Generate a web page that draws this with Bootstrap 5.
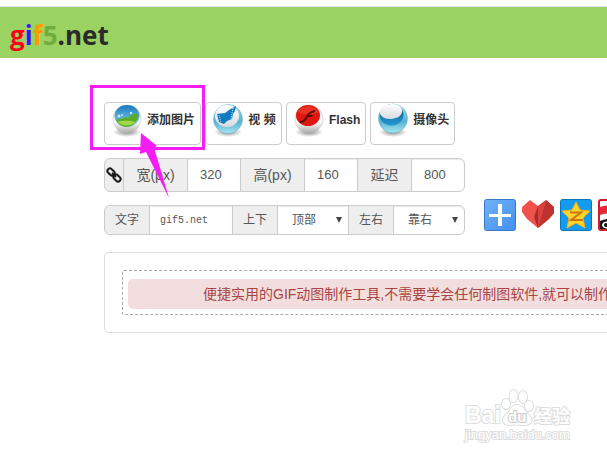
<!DOCTYPE html>
<html lang="zh-CN">
<head>
<meta charset="utf-8">
<meta name="viewport" content="width=device-width, initial-scale=1">
<title>gif5.net</title>
<link href="https://cdn.jsdelivr.net/npm/bootstrap@5.3.0/dist/css/bootstrap.min.css" rel="stylesheet">
<style>
  body { padding-top: 6px; font-family: "Liberation Sans", "Noto Sans CJK SC", sans-serif; font-size: 14px; color: #333; background: #fff; overflow-x: hidden; }
  .site-header { padding: 0 10px; height: 52px; background: #9ad362; border-top: 1px solid #e7e7e7; }
  .brand { font: bold 26px/56px "Open Sans", sans-serif; color: #2b2b2b; text-decoration: none; }
  .brand .c-g { color: #ff0018; } .brand .c-i { color: #3a14ff; } .brand .c-f { color: #ff9c00; } .brand .c-5 { color: #6fae3c; }
  .tool-area { padding: 44px 0 0 104px; }
  .source-btns { gap: 4px; }
  .source-btn { display: flex; height: 43px; padding: 0 5px 0 6px; gap: 4px; border: 1px solid #ccc; border-radius: 4px; background: #fff; color: #333; font-size: 12px; font-weight: bold; line-height: 34px; white-space: nowrap; }
  .source-btn svg { flex: none; width: 32px; height: 38px; }
  .source-btn span { min-width: 28px; }
  .fields { width: max-content; flex-wrap: nowrap; }
  .fields .input-group-text { background: #eee; border-color: #ccc; color: #555; padding: 0; justify-content: center; font-size: 14px; }
  .fields .form-control, .fields .form-select { flex: none; border-color: #ccc; color: #555; font-size: 13px; padding: 0 12px; box-shadow: inset 0 1px 1px rgba(0,0,0,.08); }
  .size-fields { height: 34px; margin-top: 13px; }
  .size-fields .form-control { width: 54px; }
  .size-fields .unit-label { width: 65px; }
  .size-fields .delay-label { width: 55px; }
  .size-fields .link-label { width: 20px; }
  .text-row { margin-top: 7px; gap: 19px; overflow: hidden; }
  .text-fields { height: 30px; margin-top: 6px; }
  .text-fields .input-group-text { font-size: 12px; width: 46px; }
  .text-fields .form-control { width: 84px; padding: 0 10px; font: 10px "Liberation Mono", monospace; }
  .text-fields .form-select { width: 72px; padding: 0 14px; font-size: 12px; background: #fff url("data:image/svg+xml,%3Csvg xmlns='http://www.w3.org/2000/svg' viewBox='0 0 6 6'%3E%3Cpath d='M0 0h6L3 6z' fill='%23444'/%3E%3C/svg%3E") no-repeat right 6px center / 6px 6px; }
  .share-links { gap: 6px; }
  .share-links a { flex: none; width: 32px; height: 32px; }
  .share-links svg { display: block; width: 32px; height: 32px; }
  .stage { margin-top: 17px; padding: 17px 0 17px 17px; border: 1px solid #ddd; border-right: 0; border-radius: 5px 0 0 5px; }
  .drop-zone { padding: 8px 0 5px 5px; border: 1px dashed #aaa; border-right: 0; border-radius: 2px 0 0 2px; }
  .notice { padding: 0 0 0 75px; margin: 0; height: 30px; line-height: 30px; border: 0; border-radius: 5px 0 0 5px; background: #f2dede; color: #a94442; white-space: nowrap; overflow: hidden; }
  .callout-box { left: -14px; top: -17px; width: 115px; height: 65px; border: 3px solid #f41df4; pointer-events: none; }
  .callout-arrow { left: 34px; top: 31px; width: 32px; height: 66px; z-index: 10; pointer-events: none; }
  .watermark { left: 460px; top: 385px; width: 120px; height: 62px; }
</style>
</head>
<body class="position-relative min-vh-100">
<header class="site-header">
  <a class="brand d-inline-block" href="#"><span class="c-g">g</span><span class="c-i">i</span><span class="c-f">f</span><span class="c-5">5</span>.net</a>
</header>

<main class="tool-area">
  <div class="source-btns d-flex position-relative">
    <button type="button" class="source-btn">
      <svg viewBox="0 0 32 38" aria-hidden="true">
        <defs>
          <linearGradient id="silver" x1="0" y1="0" x2="0" y2="1"><stop offset="0" stop-color="#ddd"/><stop offset=".6" stop-color="#fff"/><stop offset="1" stop-color="#aaa"/></linearGradient>
          <linearGradient id="sky" x1="0" y1="0" x2="0" y2="1"><stop offset="0" stop-color="#1878be"/><stop offset="1" stop-color="#8edcf5"/></linearGradient>
          <linearGradient id="aqua" x1="0" y1="0" x2="0" y2="1"><stop offset="0" stop-color="#acdce9"/><stop offset=".6" stop-color="#58b3d2"/><stop offset="1" stop-color="#a8e6f4"/></linearGradient>
          <radialGradient id="shade"><stop offset="0" stop-color="#555" stop-opacity=".8"/><stop offset="1" stop-color="#777" stop-opacity="0"/></radialGradient>
          <linearGradient id="pearl" x1="0" y1="0" x2="0" y2="1"><stop offset="0" stop-color="#fff"/><stop offset="1" stop-color="#d8dcdf"/></linearGradient>
          <linearGradient id="deep" x1="0" y1="0" x2="0" y2="1"><stop offset="0" stop-color="#08558f"/><stop offset="1" stop-color="#269bd1"/></linearGradient>
        </defs>
        <ellipse cx="16" cy="29" rx="14" ry="5" fill="url(#shade)"/>
        <circle cx="16" cy="16" r="14" fill="url(#silver)" stroke="#bbb" stroke-width=".5"/>
        <ellipse cx="16" cy="13" rx="12.5" ry="11" fill="url(#sky)"/>
        <path d="M5 17q3-3 6-1 3-3 6-1 4-5 10-4 1 3-1 6-4 7-10 7-8 0-11-7z" fill="#59ad24"/>
        <path d="M6 19q8-3 19 0-9 7-19 0z" fill="#a3d747"/>
        <g fill="#e4f8ff" opacity=".8"><circle cx="8" cy="13" r="1.5"/><circle cx="11" cy="12" r="1"/><circle cx="20" cy="10" r="1.2"/></g>
      </svg>
      <span>添加图片</span>
    </button>
    <button type="button" class="source-btn">
      <svg viewBox="0 0 32 38" aria-hidden="true">
        <ellipse cx="16" cy="29" rx="14" ry="5" fill="url(#shade)"/>
        <circle cx="16" cy="16" r="14.5" fill="url(#aqua)" stroke="#69adc4" stroke-width=".5"/>
        <ellipse cx="15" cy="13" rx="12" ry="11" fill="url(#pearl)"/>
        <path d="M5 11l8-1 4-3 7-4-1 5-2 3-1 5-5 2-3 3-5-2z" fill="#0f7cc2"/>
        <path d="M7 12l2 7M21 5l-2 11" stroke="#d3eff9" stroke-dasharray="1 1"/>
      </svg>
      <span>视 频</span>
    </button>
    <button type="button" class="source-btn">
      <svg viewBox="0 0 32 38" aria-hidden="true">
        <ellipse cx="16" cy="29" rx="14" ry="5" fill="url(#shade)"/>
        <circle cx="16" cy="16" r="14" fill="url(#silver)" stroke="#bbb" stroke-width=".5"/>
        <ellipse cx="15" cy="12.500" rx="12" ry="10.500" fill="#df1710"/>
        <path d="M4 9q10-12 22 0-10 5-22 0z" fill="#f75a43" opacity=".4"/>
        <path d="M7 18q4 0 6-5 3-5 9-6v2q-4 1-6 3h4l-1 2h-4q-3 6-8 6z" fill="#5d0d0a"/>
      </svg>
      <span>Flash</span>
    </button>
    <button type="button" class="source-btn">
      <svg viewBox="0 0 32 38" aria-hidden="true">
        <ellipse cx="16" cy="29" rx="14" ry="5" fill="url(#shade)"/>
        <circle cx="16" cy="15.500" r="14.500" fill="url(#aqua)" stroke="#69adc4" stroke-width=".5"/>
        <ellipse cx="14.500" cy="12" rx="12" ry="10.500" fill="url(#deep)"/>
        <path d="M2.500 9C4 3 10 1 16 1c6 0 10 4 9 8-1 5-7 7-12 7-6 0-10-3-10.500-7z" fill="url(#pearl)"/>
      </svg>
      <span>摄像头</span>
    </button>
    <div class="callout-box position-absolute"></div>
    <svg class="callout-arrow position-absolute" viewBox="0 0 32 66" aria-hidden="true"><path d="M3 0L19 13 16 14.500 31 65 8 19 2 21z" fill="#f41df4"/></svg>
  </div>

  <div class="input-group fields size-fields">
    <span class="input-group-text link-label">
      <svg width="16" height="16" viewBox="0 0 16 16" fill="none" stroke="#1a1a1a" stroke-width="2" aria-hidden="true"><rect x="1" y="2.500" width="8" height="5" rx="2.500" transform="rotate(45 5 5)"/><rect x="7" y="8.500" width="8" height="5" rx="2.500" transform="rotate(45 11 11)"/><path d="M6 6l4 4"/></svg>
    </span>
    <label class="input-group-text unit-label" for="gifWidth">宽(px)</label>
    <input class="form-control" id="gifWidth" type="text" value="320">
    <label class="input-group-text unit-label" for="gifHeight">高(px)</label>
    <input class="form-control" id="gifHeight" type="text" value="160">
    <label class="input-group-text delay-label" for="gifDelay">延迟</label>
    <input class="form-control" id="gifDelay" type="text" value="800">
  </div>

  <div class="text-row d-flex align-items-start">
    <div class="input-group fields text-fields flex-shrink-0">
      <label class="input-group-text" for="gifText">文字</label>
      <input class="form-control" id="gifText" type="text" value="gif5.net">
      <label class="input-group-text" for="vertical">上下</label>
      <select class="form-select" id="vertical"><option>顶部</option></select>
      <label class="input-group-text" for="horizontal">左右</label>
      <select class="form-select" id="horizontal"><option>靠右</option></select>
    </div>
    <nav class="share-links d-flex" aria-label="分享">
      <a href="#" aria-label="更多"><svg viewBox="0 0 32 32"><defs><linearGradient id="plusBg" x1="0" y1="0" x2="1" y2="1"><stop offset="0" stop-color="#71b2f8"/><stop offset="1" stop-color="#4390ec"/></linearGradient></defs><rect x=".5" y=".5" width="31" height="31" rx="2" fill="url(#plusBg)" stroke="#3978c6"/><path d="M5 15h9V5h4v10h9v3h-9v9h-4v-9H5z" fill="#fff"/></svg></a>
      <a href="#" aria-label="喜欢"><svg viewBox="0 0 32 32"><path d="M8 1L16 7 24 1 32 8V14L27 20 16 29 5 20 0 13V8z" fill="#f0524b"/><path d="M24 1L32 8V14L27 20 16 29z" fill="#be3330"/><path d="M16 7L24 1 16 29z" fill="#d8423e"/><path d="M16 7V29L12 18z" fill="#a92c2b"/></svg></a>
      <a href="#" aria-label="QQ空间"><svg viewBox="0 0 32 32"><rect x=".5" y=".5" width="31" height="31" rx="2" fill="#149bed" stroke="#0876be"/><path d="M16 3l4 8 10 1-7 7 2 10-9-5-9 5 2-10-7-7 10-1z" fill="#ffd52c" stroke="#f2b01b"/><path d="M10 13.500h11L11 21h12" fill="none" stroke="#ce7411" stroke-width="2"/></svg></a>
      <a href="#" aria-label="新浪微博"><svg viewBox="0 0 32 32"><rect x="1" y="1" width="30" height="30" rx="2" fill="#fff" stroke="#d01c26" stroke-width="2"/><path d="M2 8q7-3 20 0v8q-12-3-20 0z" fill="#e62a35"/><path d="M2 22q8-4 18 0v8H2z" fill="#181818"/><ellipse cx="9" cy="26" rx="5" ry="3.500" fill="#fff"/><circle cx="8" cy="26" r="2" fill="#111"/></svg></a>
    </nav>
  </div>

  <section class="stage">
    <div class="drop-zone"><p class="notice">便捷实用的GIF动图制作工具,不需要学会任何制图软件,就可以制作</p></div>
  </section>
</main>

<svg class="watermark position-absolute" viewBox="0 0 120 62" fill="#fff" stroke="#dedede" stroke-width="1" aria-hidden="true">
  <g font-family="'Liberation Sans', 'Noto Sans CJK SC', sans-serif" font-weight="bold" paint-order="stroke">
    <g stroke-width="2">
      <text x="5" y="38" font-size="23">Bai</text>
      <text x="74" y="38" font-size="18">经验</text>
      <text x="5" y="54" font-size="13" font-weight="normal">jingyan.baidu.com</text>
    </g>
    <path stroke-width="2" d="M57 20c7 0 7 6 11 9 6 5 4 11-4 11-4 0-10-1-14 0-9 0-9-7-3-11 4-3 3-9 10-9z"/>
    <text x="48" y="37" font-size="15" fill="#fff" stroke="#ccc" stroke-width="2">du</text>
    <g stroke-width="2"><ellipse cx="46" cy="19" rx="4" ry="5"/><ellipse cx="53.500" cy="11" rx="4" ry="6"/><ellipse cx="63" cy="12" rx="4" ry="6"/><ellipse cx="69" cy="21" rx="4" ry="5"/></g>
  </g>
</svg>
<script src="https://cdn.jsdelivr.net/npm/bootstrap@5.3.0/dist/js/bootstrap.bundle.min.js"></script>
</body>
</html>
